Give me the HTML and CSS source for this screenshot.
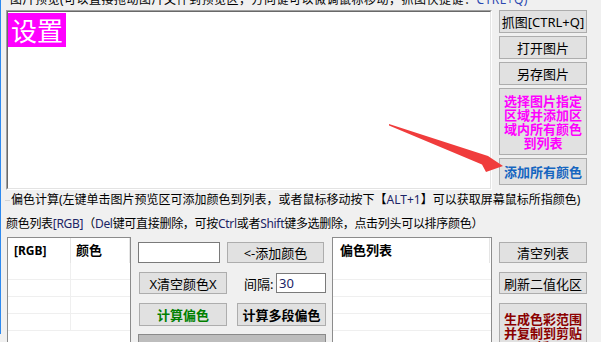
FILE: index.html
```html
<!DOCTYPE html>
<html lang="zh">
<head>
<meta charset="utf-8">
<title>偏色计算</title>
<link rel="stylesheet" href="styles.css">
</head>
<body>
<div class="window">
  <div class="title-top">图片预览(可以直接拖动图片文件到预览区，方向键可以微调鼠标移动，抓图快捷键：<span class="blue">CTRL+Q)</span></div>
  <div class="top-row">
    <div class="preview-outer">
      <div class="preview-inner">
        <div class="tag">设置</div>
      </div>
    </div>
    <div class="side">
      <div class="btn h23">抓图[CTRL+Q]</div>
      <div class="btn h23">打开图片</div>
      <div class="btn h23">另存图片</div>
      <div class="btn btn-multi magenta h67">选择图片指定<br>区域并添加区<br>域内所有颜色<br>到列表</div>
      <div class="btn bold blue-text h27">添加所有颜色</div>
    </div>
  </div>

  <div class="group-title"><span class="tick"></span><span>偏色计算(左键单击图片预览区可添加颜色到列表，或者鼠标移动按下【<span class="latin">ALT+1</span>】可以获取屏幕鼠标所指颜色)</span></div>
  <div class="list-caption">颜色列表<span class="latin">[RGB]</span>（<span class="latin">Del</span>键可直接删除，可按<span class="latin">Ctrl</span>或者<span class="latin">Shift</span>键多选删除，点击列头可以排序颜色）</div>

  <div class="bottom-row">
    <div class="list list-rgb">
      <div class="lrow head">
        <div class="cell c1 hcell">[RGB]</div>
        <div class="cell c2 hcell">颜色</div>
      </div>
      <div class="lrow"><div class="cell c1"></div><div class="cell c2"></div></div>
      <div class="lrow"><div class="cell c1"></div><div class="cell c2"></div></div>
      <div class="lrow"><div class="cell c1"></div><div class="cell c2"></div></div>
      <div class="lrow"><div class="cell c1"></div><div class="cell c2"></div></div>
    </div>

    <div class="mid">
      <div class="mrow r1">
        <div class="input in-color"></div>
        <div class="btn w97 h21">&lt;-添加颜色</div>
      </div>
      <div class="mrow r2">
        <div class="btn w88 h22 ml1">X清空颜色X</div>
        <div class="gap-label">间隔:</div>
        <div class="input in-gap">30</div>
      </div>
      <div class="mrow r3">
        <div class="btn w88 h23 ml1 bold green">计算偏色</div>
        <div class="btn w89 h23 bold">计算多段偏色</div>
      </div>
      <div class="bar"></div>
    </div>

    <div class="list list-offset">
      <div class="lrow head">
        <div class="cell o1 hcell">偏色列表</div>
      </div>
      <div class="lrow"></div>
      <div class="lrow"></div>
      <div class="lrow"></div>
      <div class="lrow"></div>
    </div>

    <div class="side2">
      <div class="btn h21">清空列表</div>
      <div class="btn h22">刷新二值化区</div>
      <div class="btn btn-multi bold maroon h60">生成色彩范围<br>并复制到剪贴<br>板</div>
    </div>
  </div>
</div>

<svg class="arrow" width="601" height="342" viewBox="0 0 601 342">
  <polygon points="389,124 488,156 503,166 486,172 482,164.5 389,125.5" fill="#f03c3c"/>
</svg>
</body>
</html>
```

FILE: styles.css
```css
* { box-sizing: border-box; }
html, body { margin: 0; padding: 0; }
body {
  width: 601px;
  height: 342px;
  overflow: hidden;
  position: relative;
  background: #f0f0f0;
  color: #000;
  font-family: "Noto Sans", "Noto Sans CJK SC", sans-serif;
  font-size: 12px;
}
.window {
  height: 342px;
  border-left: 1px solid #2d89ef;
}
.title-top {
  margin-top: -8px;
  height: 16px;
  line-height: 16px;
  padding-left: 9px;
  white-space: nowrap;
  letter-spacing: 0.5px;
}
.blue { color: #2a48b0; }
.latin { color: #1c2466; }

.top-row {
  display: flex;
  margin-top: 2px;
  padding-left: 5px;
}
.preview-outer {
  width: 486px;
  height: 180px;
  border: 1px solid;
  border-color: #a0a0a0 #ffffff #ffffff #a0a0a0;
}
.preview-inner {
  height: 100%;
  border: 1px solid;
  border-color: #696969 #e3e3e3 #e3e3e3 #696969;
  background: #fff;
  padding-top: 1px;
}
.tag {
  display: inline-block;
  background: #ff00ff;
  color: #fff;
  font-family: "Noto Sans CJK SC", sans-serif;
  font-size: 26px;
  line-height: 34px;
  height: 34px;
  padding: 0 3px;
}
.side {
  display: flex;
  flex-direction: column;
  gap: 3px;
  margin-left: 7px;
  width: 88px;
}
.btn {
  display: flex;
  align-items: center;
  justify-content: center;
  background: #e1e1e1;
  border: 1px solid #adadad;
  font-size: 13px;
  text-align: center;
  white-space: nowrap;
  flex: none;
}
.btn-multi { line-height: 14px; }
.bold { font-weight: bold; }
.magenta { color: #ff00ff; font-weight: bold; }
.blue-text { color: #1565c0; }
.green { color: #008000; }
.maroon { color: #8b0000; }
.h21 { height: 21px; }
.h22 { height: 22px; }
.h23 { height: 23px; }
.h27 { height: 27px; }
.h60 { height: 60px; }
.h67 { height: 67px; }
.w88 { width: 88px; }
.w89 { width: 89px; }
.w97 { width: 97px; }
.ml1 { margin-left: 1px; }

.group-title {
  display: flex;
  align-items: center;
  margin-top: 2px;
  height: 16px;
  line-height: 16px;
  white-space: nowrap;
}
.tick {
  width: 5px;
  height: 1px;
  background: #d5d5d5;
  margin-left: 4px;
  margin-right: 1px;
}
.list-caption {
  margin-top: 8px;
  height: 16px;
  line-height: 16px;
  padding-left: 5px;
  white-space: nowrap;
  letter-spacing: -0.3px;
}

.bottom-row {
  display: flex;
  margin-top: 5px;
  height: 110px;
}
.list {
  background: #fff;
  border: 1px solid #8c8c8c;
  border-bottom: none;
  height: 110px;
  flex: none;
}
.list-rgb {
  margin-left: 6px;
  width: 124px;
}
.list-offset {
  width: 160px;
}
.lrow {
  display: flex;
  height: 17px;
  border-bottom: 1px solid #efefef;
}
.lrow.head {
  height: 25px;
  border-bottom: none;
}
.cell { height: 100%; }
.c1 { width: 63px; border-right: 1px solid #efefef; }
.c2 { width: 59px; }
.o1 { width: 157px; border-right: 1px solid #e5e5e5; }
.head .c1, .head .c2 { border-right: 1px solid #e5e5e5; }
.hcell {
  font-weight: bold;
  line-height: 25px;
  white-space: nowrap;
}
.head .c1 { padding-left: 6px; font-size: 12px; }
.head .c2 { padding-left: 5px; font-size: 13px; }
.head .o1 { padding-left: 7px; font-size: 13px; }

.mid {
  width: 201px;
  padding-left: 7px;
  flex: none;
}
.mrow { display: flex; align-items: center; }
.r1 { margin-top: 5px; gap: 7px; }
.r2 { margin-top: 9px; }
.r3 { margin-top: 9px; gap: 10px; }
.input {
  background: #fff;
  border: 1px solid #7a7a7a;
  flex: none;
}
.in-color { width: 82px; height: 21px; }
.gap-label {
  margin-left: 17px;
  width: 32px;
  font-size: 13px;
  white-space: nowrap;
}
.in-gap {
  width: 50px;
  height: 20px;
  line-height: 18px;
  padding-left: 2px;
  font-size: 13px;
  color: #1c2466;
}
.bar {
  margin-top: 8px;
  width: 188px;
  height: 20px;
  border: 1px solid #8a8a8a;
  background: #bdbdbd;
}

.side2 {
  display: flex;
  flex-direction: column;
  gap: 9px;
  margin-left: 7px;
  margin-top: 5px;
  width: 88px;
  flex: none;
}

.arrow {
  position: absolute;
  left: 0;
  top: 0;
  pointer-events: none;
}
```
